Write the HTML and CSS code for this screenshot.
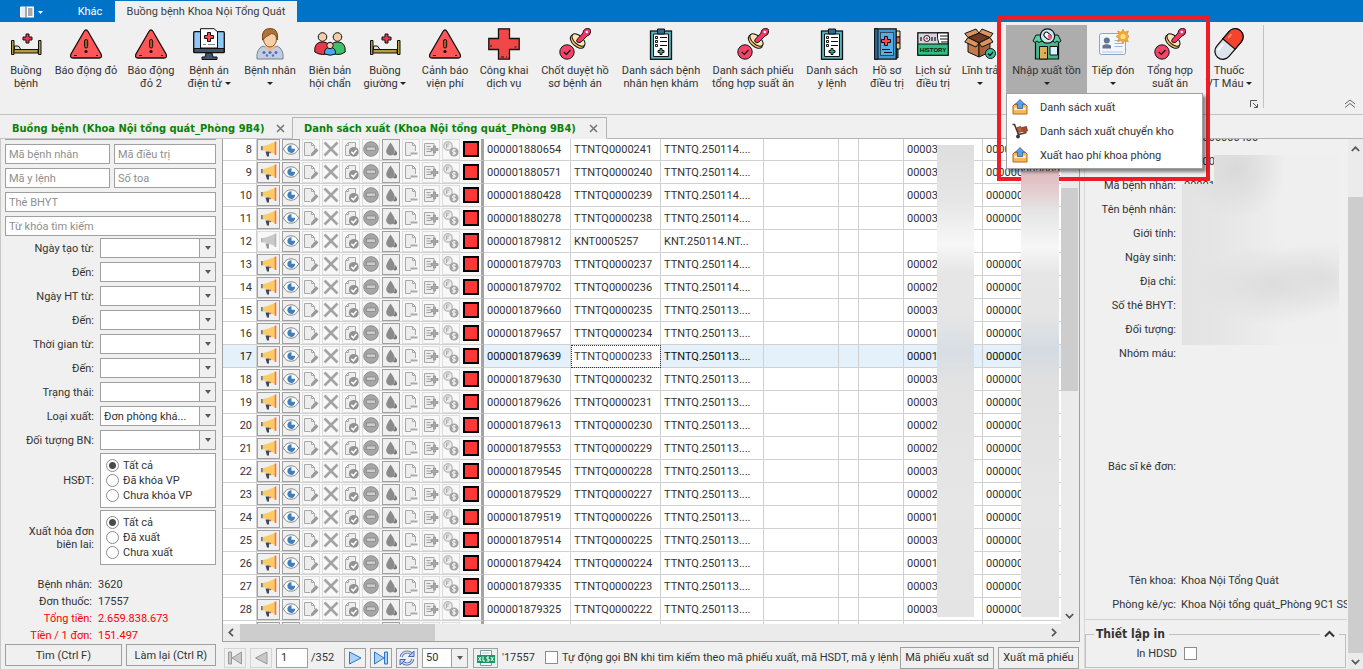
FILE: index.html
```html
<!DOCTYPE html>
<html lang="vi">
<head>
<meta charset="utf-8">
<title>Buồng bệnh Khoa Nội Tổng Quát</title>
<link rel="stylesheet" href="styles.css">
</head>
<body>
<svg class="defs" aria-hidden="true">
  <symbol id="i-bed" viewBox="0 0 32 32"><path d="M1.500 12.500h2.500v14h-2.500zM28.500 12.500h2.500v14h-2.500z" fill="#b59a3f" stroke="#111"/><path d="M4 21.500h24v3.500H4z" fill="#b59a3f" stroke="#111"/><path d="M4.500 21v-3h4l2 3" fill="#ddd" stroke="#111"/><path d="M16 6h3v3h3v3h-3v3h-3v-3h-3V9h3z" fill="#e8394a" stroke="#111"/></symbol>
  <symbol id="i-warn" viewBox="0 0 32 32"><path d="M14 3.500q2-3 4 0L31 26q1.500 4-2 4H3q-3.500 0-2-4z" fill="#ff5757" stroke="#111" stroke-width="1.300"/><rect x="14.500" y="11.500" width="3.200" height="8.500" rx="1.600" fill="#a05a2c" stroke="#111"/><circle cx="16" cy="23.500" r="1.600" fill="#111"/><path d="M4 27.500h3M26 27.500h2" stroke="#111"/></symbol>
  <symbol id="i-emr" viewBox="0 0 32 32"><rect x=".7" y="3.700" width="30.600" height="21" rx="1" fill="#8fc7f5" stroke="#111" stroke-width="1.300"/><path d="M1 20.500h30v4H1z" fill="#3d5670" stroke="#111"/><path d="M13 25h6l1 4h4v2.500H9V29h3z" fill="#3d5670" stroke="#111"/><path d="M7.500.7H21l3.500 3V20h-17z" fill="#fff" stroke="#111"/><path d="M14.500 4.500h3v3h3v3h-3v3h-3v-3h-3v-3h3z" fill="#ff4a4a" stroke="#111"/><path d="M10 16.500h3m2 0h7" stroke="#888"/></symbol>
  <symbol id="i-patient" viewBox="0 0 32 32"><path d="M3 31q-1-10 6-13l7 4 7-4q7 3 6 13z" fill="#c3cfdf" stroke="#71809a"/><path d="M11 16h10v4l-5 3-5-3z" fill="#efb98a"/><ellipse cx="16" cy="11" rx="6.500" ry="8" fill="#f7cfa4" stroke="#8a5628"/><path d="M8.500 12Q7 .5 16 .5T23.500 12q-1-6-6-6.500-6 3-9 6.500z" fill="#b0713a" stroke="#7a4a20"/><g fill="#5a6cc0"><circle cx="10" cy="24.500" r="1.600"/><circle cx="16" cy="24.500" r="1.600"/><circle cx="22" cy="24.500" r="1.600"/><circle cx="13" cy="27.500" r="1.200"/><circle cx="19" cy="27.500" r="1.200"/></g></symbol>
  <symbol id="i-group" viewBox="0 0 32 32"><path d="M.8 24q-1-10 7.700-10T16 24q-7 5-15.200 0z" fill="#e8394a" stroke="#111"/><path d="M16 24q-1-10 7.500-10T31.200 24q-7 5-15.200 0z" fill="#3fbf6b" stroke="#111"/><circle cx="8.500" cy="9" r="4.300" fill="#f7cba8" stroke="#111"/><circle cx="23.500" cy="9" r="4.300" fill="#f7cba8" stroke="#111"/><path d="M10.500 26q-.5-6.500 5.500-6.500t5.500 6.500q-5 2.500-11 0z" fill="#4aa8f0" stroke="#111"/><circle cx="16" cy="17.500" r="3.200" fill="#f7cba8" stroke="#111"/></symbol>
  <symbol id="i-cross" viewBox="0 0 32 32"><path d="M10.500.8h11v9.700h9.700v11h-9.700v9.700h-11v-9.700H.8v-11h9.700z" fill="#f04848" stroke="#111" stroke-width="1.300"/><path d="M13 29h3m2 0h1M3 19v-2M28.500 19h-2" stroke="#111"/></symbol>
  <symbol id="i-stamp" viewBox="0 0 32 32"><ellipse cx="18.500" cy="13.500" rx="8.500" ry="5" transform="rotate(42 18.500 13.500)" fill="#ffc266" stroke="#111"/><ellipse cx="19.500" cy="12" rx="8" ry="4.200" transform="rotate(42 19.500 12)" fill="#fbe7b5" stroke="#111"/><path d="M18.500 11l5.500-6q.5-4.500 4.500-4.500T31.500 4q0 3-3.500 4l-6 6q-2.500 1.500-3.800 0t.3-3z" fill="#f5346a" stroke="#111"/><circle cx="27.800" cy="4" r="1.200" fill="#fff"/><circle cx="8" cy="24" r="7.200" fill="#f5446a" stroke="#111"/><path d="M4.800 24l2.500 2.500 4.200-4.500" fill="none" stroke="#111" stroke-width="1.200"/></symbol>
  <symbol id="i-clip" viewBox="0 0 32 32"><rect x="5.500" y="3" width="21" height="28.300" fill="#56b6c0" stroke="#111" stroke-width="1.300"/><path d="M8.500 6h15v22.500h-15z" fill="#fff" stroke="#111"/><path d="M12.500 1h7v5h-7z" fill="#2d6a96" stroke="#111"/><path d="M15 9.500h7M15 13.500h7M15 17.500h7" stroke="#111" stroke-width="1.200"/><path d="M10.500 8.500h2v2h-2zM10.500 12.500h2v2h-2zM10.500 16.500h2v2h-2z" fill="#fff" stroke="#111"/><path d="M15 20.500h2v2h2v2h-2v2h-2v-2h-2v-2h2z" fill="#35b59a" stroke="#111"/></symbol>
  <symbol id="i-book" viewBox="0 0 32 32"><path d="M24 3h5v6h-5z" fill="#f7d7b0" stroke="#111"/><path d="M24 9h5v6h-5z" fill="#e8604a" stroke="#111"/><path d="M24 15h5v6h-5z" fill="#f5d070" stroke="#111"/><path d="M24 21h3v9h-3z" fill="#2d6a96" stroke="#111"/><path d="M3.700.8h21.500v30.400H3.700z" fill="#4597cf" stroke="#111" stroke-width="1.300"/><path d="M3.700.8H7v30.400H3.700z" fill="#2d6a96" stroke="#111"/><rect x="9.500" y="4.500" width="13" height="23" fill="#59ade0" stroke="#2a4a66"/><path d="M13.500 8.500h3v3h3v3h-3v3h-3v-3h-3v-3h3z" fill="#ff4a4a" stroke="#111"/><path d="M11 21.500h8m-6 3h8" stroke="#111"/></symbol>
  <symbol id="i-history" viewBox="0 0 32 32"><rect x=".8" y="4.800" width="30.400" height="22.400" fill="#d8d4e2" stroke="#111" stroke-width="1.300"/><path d="M20.500 5H31v11h-9q-2-5-1.500-11z" fill="#fff" stroke="#111"/><path d="M23 8h8m-8 3h8m-7 3h7M4 9v4M15 9v4M18 9v4" stroke="#111" stroke-width="1.200"/><circle cx="9.800" cy="10.500" r="3" fill="#fff" stroke="#111"/><circle cx="9.800" cy="10.500" r="1.300" fill="#e8394a"/><path d="M.8 16h30.400v11.200H.8z" fill="#2fbf82" stroke="#111"/><text x="16" y="24" text-anchor="middle" class="hist">HISTORY</text></symbol>
  <symbol id="i-box" viewBox="0 0 32 32"><path d="M4 10l11 5v14L4 24z" fill="#c27a4a" stroke="#111"/><path d="M26 10l-11 5v14l11-5z" fill="#a8623a" stroke="#111"/><path d="M4 9.500L15 5l11 4.500L15 15z" fill="#6e3a22" stroke="#111"/><path d="M4 9.500L.8 5.500 12 1l3 4zM26 9.500l3-4L18 1l-3 4zM4 9.500L.8 14 12 19l3-4zM26 9.500l3 4.500-11 5-3-4z" fill="#d99461" stroke="#111"/><circle cx="26.500" cy="25.500" r="5" fill="#35c1a0" stroke="#111"/><path d="M24 25.500l2 2 3-3.500" fill="none" stroke="#111" stroke-width="1.200"/></symbol>
  <symbol id="i-store" viewBox="0 0 32 32"><path d="M4.500 13h23v18h-23z" fill="#47b88d" stroke="#111" stroke-width="1.200"/><path d="M5 7h22l3 6q-2 3-4 0-2 3-4.500 0-2.500 3-5.500 0-2.500 3-5.500 0-2.500 3-4.500 0-2 3-4 0z" fill="#5bd0a3" stroke="#111"/><path d="M8.500 18.500h8V31h-8z" fill="#e3ad5e" stroke="#111"/><path d="M19 18.500h7.500V27H19z" fill="#d9f1ff" stroke="#111"/><circle cx="14" cy="25" r=".8" fill="#111"/><circle cx="16.500" cy="8" r="7.200" fill="#c9e6f5" stroke="#111" stroke-width="1.200"/><rect x="12.500" y="5.200" width="8" height="5" rx="2.500" transform="rotate(42 16.500 7.800)" fill="#fff" stroke="#111"/><path d="M16.500 7.800l1.600-1.700q3 2 3 3.500-1 3-3 2z" fill="#f06070"/></symbol>
  <symbol id="i-card" viewBox="0 0 32 32"><rect x="2.500" y="5.500" width="26" height="21" rx="2" fill="#f3f7fd" stroke="#8ba4c8"/><path d="M5 24h21" stroke="#d4e0f0" stroke-width="2"/><circle cx="9.800" cy="12.500" r="3" fill="#64748f"/><path d="M5.500 20.500v-3q4-2.500 8.500 0v3z" fill="#64748f"/><path d="M17.500 12.500h4M17.500 15.500h8M17.500 18.500h8" stroke="#9db3d2"/><path d="M26 1l1.700 3.300 3.700-1.300-1.300 3.700L33 8.500l-3 1.800 1.300 3.500-3.700-1.200L26 16l-1.700-3.400-3.600 1.200 1.200-3.500L19 8.500l2.900-1.800L20.700 3l3.600 1.300z" fill="#f5a93b" stroke="#d28420" stroke-width=".6"/><circle cx="26" cy="8.500" r="2.600" fill="#ffdf8a"/></symbol>
  <symbol id="i-pill" viewBox="0 0 32 32"><g transform="rotate(-50 16 16)"><rect x="-1.500" y="8" width="35" height="16" rx="8" fill="#dde3ea" stroke="#111" stroke-width="1.300"/><path d="M16 8h9.500a8 8 0 0 1 0 16H16z" fill="#f4442e" stroke="#111" stroke-width="1.200"/><path d="M4 11.500h8" stroke="#fff" stroke-width="2"/><path d="M20 11.500h5" stroke="#ff9a85" stroke-width="1.500"/></g></symbol>
  <symbol id="i-out" viewBox="0 0 16 16"><path d="M1 7l2-2h10l2 2v8H1z" fill="#f6b95a" stroke="#b8651c"/><path d="M2 8.500h3.500q2.500 3 5 0H14V11H2z" fill="#ffe9b8"/><path d="M8 .6l4.700 4.600h-2.200V9.500h-5V5.200H3.300z" fill="#5f9fe5" stroke="#2c5f9e" stroke-width=".8"/></symbol>
  <symbol id="i-cart" viewBox="0 0 16 16"><path d="M.5 1.500h2l4 10 8-2" fill="none" stroke="#4a3a30" stroke-width="1.600"/><path d="M5 4.500l4-1 1.500 5-4 1z" fill="#c2603a" stroke="#6a2c18" stroke-width=".7"/><path d="M10 4.500l4.500-1 1 4.500-4 1z" fill="#a84a2c" stroke="#6a2c18" stroke-width=".7"/><circle cx="6" cy="13.500" r="1.900" fill="#2f3a3a"/></symbol>
  <symbol id="g-mega" viewBox="0 0 16 16"><path d="M1.500 5l4-.8L14 1v12L5.500 9.800l-4-.3z" fill="#fbcb66"/><path d="M13.700.5h1.600v13.500h-1.600z" fill="#ff7043"/><path d="M.3 5h1.200v4.200H.3zM4.500 10.500H8V15.500H6z" fill="#34495e"/><path d="M8 10.800h2v1.500H8z" fill="#e8543a"/></symbol>
  <symbol id="g-mega-off" viewBox="0 0 16 16"><path d="M1.500 5l4-.8L14 1v12L5.500 9.800l-4-.3z" fill="#c9c9c9"/><path d="M13.700.5h1.600v13.500h-1.600z" fill="#b5b5b5"/><path d="M.3 5h1.200v4.200H.3zM4.500 10.500H8V15.500H6z" fill="#979797"/></symbol>
  <symbol id="g-eye" viewBox="0 0 16 16"><path d="M.4 8Q3 2.800 8 2.800T15.600 8Q13 13.200 8 13.200T.4 8z" fill="#fff" stroke="#777" stroke-width=".9"/><path d="M8.500 4.200V7.800h3.600A3.900 3.900 0 1 1 8.500 4.200z" fill="#3f7fbe"/></symbol>
  <symbol id="g-edit" viewBox="0 0 16 16"><path d="M7 14.500H1.500v-13h7l3 3V8" fill="#ededed" stroke="#a8a8a8"/><path d="M8.500 1.500v3h3" fill="none" stroke="#a8a8a8"/><path d="M13 7l2.500 2.500-5 5L7.500 15.500l.7-3z" fill="#9a9a9a"/></symbol>
  <symbol id="g-x" viewBox="0 0 16 16"><path d="M1.500 1.500l13 13m0-13l-13 13" stroke="#a3a3a3" stroke-width="2.600"/></symbol>
  <symbol id="g-check" viewBox="0 0 16 16"><path d="M7 14.500H2.500v-10l3-3h7V7" fill="#ededed" stroke="#a8a8a8"/><path d="M5.500 1.500v3h-3" fill="none" stroke="#a8a8a8"/><circle cx="10.800" cy="10.800" r="4.900" fill="#929292"/><path d="M8.300 10.800l2 2 3.200-3.800" fill="none" stroke="#fff" stroke-width="1.500"/></symbol>
  <symbol id="g-minus" viewBox="0 0 16 16"><circle cx="8" cy="8" r="7.300" fill="#a6a6a6" stroke="#8f8f8f"/><rect x="3.500" y="6" width="9" height="3.600" fill="#ccc" stroke="#808080" stroke-width=".7"/></symbol>
  <symbol id="g-drop" viewBox="0 0 16 16"><path d="M7.500 1.500q4.500 6 4.300 8.800a4.300 4.300 0 0 1-8.600 0Q3.500 7 7.500 1.500z" fill="#8b8b8b"/><path d="M12.300 9q2.500 3 1.500 4.500T10 14q2.300-1.500 2.300-5z" fill="#777"/></symbol>
  <symbol id="g-page" viewBox="0 0 16 16"><path d="M8 14.500H2.500v-13h7l3 3V10" fill="#ededed" stroke="#a8a8a8"/><path d="M9.500 1.500v3h3" fill="none" stroke="#a8a8a8"/><path d="M7.500 11.500h7v2h-7z" fill="#aaa"/></symbol>
  <symbol id="g-add" viewBox="0 0 16 16"><path d="M11 12v2.500H1.500v-12H11V5" fill="#ededed" stroke="#a8a8a8"/><path d="M3.500 5.500h4m-4 2.500h4m-4 2.500h5" stroke="#a0a0a0"/><path d="M10.500 5h2v2.500H15v2h-2.500V12h-2V9.500H8v-2h2.500z" fill="#aaa" stroke="#888" stroke-width=".7"/></symbol>
  <symbol id="g-coin" viewBox="0 0 16 16"><circle cx="5" cy="5" r="4.200" fill="#ededed" stroke="#bdbdbd" stroke-width="1.400"/><path d="M6.500 3h-3v4M3.500 5h2" fill="none" stroke="#a8a8a8"/><circle cx="11" cy="11" r="4.600" fill="#a3a3a3"/><path d="M12.800 9q-3.500-1-3.500.8t3.400 2q0 1.800-3.500 1.200M11 7.800v6.400" fill="none" stroke="#fff" stroke-width=".9"/></symbol>
  <symbol id="g-red" viewBox="0 0 16 16"><path d="M1 1h14v14H1z" fill="#ff3737" stroke="#000" stroke-width="2"/></symbol>
</svg>

<div class="app">
  <header class="titlebar">
    <button class="appmenu" aria-label="Trình đơn"><svg width="26" height="12" viewBox="0 0 26 12"><path d="M1.500 1h5v10h-5z" fill="#e8eef5" stroke="#fff"/><path d="M7 .5h8v11H7z" fill="#fff"/><path d="M7 1v10M9 3h4.500M9 5h4.500M9 7h4.500M9 9h4.500" stroke="#555"/><path d="M19 5h5l-2.500 3z" fill="#fff"/></svg></button>
    <button class="rtab">Khác</button>
    <button class="rtab active">Buồng bệnh Khoa Nội Tổng Quát</button>
  </header>

  <nav class="ribbon">
    <button class="item w52"><svg><use href="#i-bed"/></svg><span>Buồng<br>bệnh</span></button>
    <button class="item w68"><svg><use href="#i-warn"/></svg><span>Báo động đỏ</span></button>
    <button class="item w62"><svg><use href="#i-warn"/></svg><span>Báo động<br>đỏ 2</span></button>
    <button class="item w54"><svg><use href="#i-emr"/></svg><span>Bệnh án<br>điện tử <i class="dd"></i></span></button>
    <button class="item w68"><svg><use href="#i-patient"/></svg><span>Bệnh nhân<br><i class="dd"></i></span></button>
    <button class="item w52"><svg><use href="#i-group"/></svg><span>Biên bản<br>hội chẩn</span></button>
    <button class="item w58"><svg><use href="#i-bed"/></svg><span>Buồng<br>giường <i class="dd"></i></span></button>
    <button class="item w62"><svg><use href="#i-warn"/></svg><span>Cảnh báo<br>viện phí</span></button>
    <button class="item w56"><svg><use href="#i-cross"/></svg><span>Công khai<br>dịch vụ</span></button>
    <button class="item w86"><svg><use href="#i-stamp"/></svg><span>Chốt duyệt hồ<br>sơ bệnh án</span></button>
    <button class="item w86"><svg><use href="#i-clip"/></svg><span>Danh sách bệnh<br>nhân hẹn khám</span></button>
    <button class="item w98"><svg><use href="#i-stamp"/></svg><span>Danh sách phiếu<br>tổng hợp suất ăn</span></button>
    <button class="item w60"><svg><use href="#i-clip"/></svg><span>Danh sách<br>y lệnh</span></button>
    <button class="item w50"><svg><use href="#i-book"/></svg><span>Hồ sơ<br>điều trị</span></button>
    <button class="item w42"><svg><use href="#i-history"/></svg><span>Lịch sử<br>điều trị</span></button>
    <button class="item w52"><svg><use href="#i-box"/></svg><span>Lĩnh trả<br><i class="dd"></i></span></button>
    <div class="anchor">
      <button class="item w81 open"><svg><use href="#i-store"/></svg><span>Nhập xuất tồn<br><i class="dd"></i></span></button>
      <div class="callout"></div>
      <div class="menu">
        <button><svg><use href="#i-out"/></svg>Danh sách xuất</button>
        <button><svg><use href="#i-cart"/></svg>Danh sách xuất chuyển kho</button>
        <button><svg><use href="#i-out"/></svg>Xuất hao phí khoa phòng</button>
      </div>
    </div>
    <button class="item w52"><svg><use href="#i-card"/></svg><span>Tiếp đón<br><i class="dd"></i></span></button>
    <button class="item w62"><svg><use href="#i-stamp"/></svg><span>Tổng hợp<br>suất ăn</span></button>
    <button class="item w56"><svg><use href="#i-pill"/></svg><span>Thuốc<br>VT Máu <i class="dd"></i></span></button>
    <div class="launcher"><svg width="8" height="8" viewBox="0 0 8 8"><path d="M.5 7V.5H7M3 3l4 4M7.500 4v3.500H4" fill="none" stroke="#555"/></svg></div>
    <button class="collapse" aria-label="Thu gọn"><svg width="12" height="9" viewBox="0 0 12 9"><path d="M1 5l5-4 5 4M1 8.500l5-4 5 4" fill="none" stroke="#666"/></svg></button>
  </nav>

  <div class="doctabs">
    <div class="doctab">Buồng bệnh (Khoa Nội tổng quát_Phòng 9B4)<button aria-label="Đóng"><svg width="9" height="9" viewBox="0 0 9 9"><path d="M1 1l7 7m0-7L1 8" stroke="#777" stroke-width="1.600"/></svg></button></div>
    <div class="doctab active">Danh sách xuất (Khoa Nội tổng quát_Phòng 9B4)<button aria-label="Đóng"><svg width="9" height="9" viewBox="0 0 9 9"><path d="M1 1l7 7m0-7L1 8" stroke="#777" stroke-width="1.600"/></svg></button></div>
    <div class="rest"></div>
  </div>

  <main class="main">
    <form class="filter">
      <div class="cut"></div>
      <div class="pair"><input class="a" placeholder="Mã bệnh nhân" aria-label="Mã bệnh nhân"><input class="b" placeholder="Mã điều trị" aria-label="Mã điều trị"></div>
      <div class="pair"><input class="a" placeholder="Mã y lệnh" aria-label="Mã y lệnh"><input class="b" placeholder="Số toa" aria-label="Số toa"></div>
      <div class="pair"><input placeholder="Thẻ BHYT" aria-label="Thẻ BHYT"></div>
      <div class="pair"><input placeholder="Từ khóa tìm kiếm" aria-label="Từ khóa tìm kiếm"></div>
      <div class="fields">
        <label for="f1">Ngày tạo từ:</label><div class="combo"><select id="f1"><option></option></select></div>
        <label for="f2">Đến:</label><div class="combo"><select id="f2"><option></option></select></div>
        <label for="f3">Ngày HT từ:</label><div class="combo"><select id="f3"><option></option></select></div>
        <label for="f4">Đến:</label><div class="combo"><select id="f4"><option></option></select></div>
        <label for="f5">Thời gian từ:</label><div class="combo"><select id="f5"><option></option></select></div>
        <label for="f6">Đến:</label><div class="combo"><select id="f6"><option></option></select></div>
        <label for="f7">Trạng thái:</label><div class="combo"><select id="f7"><option></option></select></div>
        <label for="f8">Loại xuất:</label><div class="combo"><select id="f8"><option>Đơn phòng khá...</option></select></div>
        <label for="f9">Đối tượng BN:</label><div class="combo"><select id="f9"><option></option></select></div>
      </div>
      <div class="choice"><span>HSĐT:</span><div class="radios"><label><input type="radio" name="h" checked>Tất cả</label><label><input type="radio" name="h">Đã khóa VP</label><label><input type="radio" name="h">Chưa khóa VP</label></div></div>
      <div class="choice"><span>Xuất hóa đơn<br>biên lai:</span><div class="radios"><label><input type="radio" name="x" checked>Tất cả</label><label><input type="radio" name="x">Đã xuất</label><label><input type="radio" name="x">Chưa xuất</label></div></div>
      <div class="stats">
        <span>Bệnh nhân:</span><b>3620</b>
        <span>Đơn thuốc:</span><b>17557</b>
        <span class="red">Tổng tiền:</span><b class="red">2.659.838.673</b>
        <span class="red">Tiền / 1 đơn:</span><b class="red">151.497</b>
      </div>
      <div class="actions"><button type="button" class="btn find">Tìm (Ctrl F)</button><button type="button" class="btn reset">Làm lại (Ctrl R)</button></div>
    </form>

    <section class="center">
      <div class="grid">
        <div class="gridview">
          <table class="rows">
            <colgroup><col class="c34"><col class="c24"><col class="c20" span="9"><col class="c23"><col class="c87"><col class="c90"><col class="c103"><col class="c75"><col class="c20"><col class="c45"><col class="c79"><col></colgroup>
            <tbody id="rows"></tbody>
          </table>
          <div class="mask m1"></div>
          <div class="mask m2"></div>
        </div>
        <div class="vbar"><i class="thumb"></i><svg width="9" height="6" viewBox="0 0 9 6"><path d="M.8 1l3.700 3.700L8.200 1" fill="none" stroke="#555" stroke-width="1.700"/></svg></div>
        <div class="hbar"><svg width="6" height="9" viewBox="0 0 6 9"><path d="M5 .8L1.300 4.500 5 8.200" fill="none" stroke="#555" stroke-width="1.700"/></svg><i class="thumb"></i><svg width="6" height="9" viewBox="0 0 6 9"><path d="M1 .8l3.700 3.700L1 8.200" fill="none" stroke="#555" stroke-width="1.700"/></svg></div>
      </div>
      <div class="pager">
        <button class="pb off" aria-label="Trang đầu"><svg viewBox="0 0 16 16"><path d="M1.500 2h3v12h-3zM14.500 2v12L5 8z" fill="#c8c8c8" stroke="#999"/></svg></button>
        <button class="pb off" aria-label="Trang trước"><svg viewBox="0 0 16 16"><path d="M14 2v12L2.500 8z" fill="#c8c8c8" stroke="#999"/></svg></button>
        <input class="pno" value="1" aria-label="Trang">
        <span class="tot">/352</span>
        <button class="pb" aria-label="Trang sau"><svg viewBox="0 0 16 16"><path d="M2.500 2v12L14 8z" fill="#a9d2fa" stroke="#2f74c8"/></svg></button>
        <button class="pb" aria-label="Trang cuối"><svg viewBox="0 0 16 16"><path d="M11.500 2h3v12h-3zM1.500 2v12L11 8z" fill="#a9d2fa" stroke="#2f74c8"/></svg></button>
        <button class="pb" aria-label="Làm mới"><svg viewBox="0 0 16 16"><path d="M2.200 7A6 6 0 0 1 12 3.500M13.800 9A6 6 0 0 1 4 12.500" fill="none" stroke="#4a68b0" stroke-width="3"/><path d="M2.200 7A6 6 0 0 1 12 3.500M13.800 9A6 6 0 0 1 4 12.500" fill="none" stroke="#d5e1f7" stroke-width="1.300"/><path d="M9.500 6.500h5.500V1zM6.500 9.500H1V15z" fill="#b9cbf0" stroke="#4a68b0"/></svg></button>
        <div class="combo size"><select aria-label="Số dòng"><option>50</option></select></div>
        <button class="pb xls" aria-label="Xuất XLSX"><svg viewBox="0 0 18 16"><path d="M3.500.5h11v15h-11z" fill="#fff" stroke="#7a9aa8"/><path d="M5.500 3h7" stroke="#9cc"/><path d="M0 5h18v8H0z" fill="#159a63"/><path d="M1.500 7l2.500 4m0-4l-2.500 4M6 6.500V11h2M12 7h-2v2h2v2h-2.500M14 7l2.500 4m0-4L14 11" fill="none" stroke="#fff"/></svg></button>
        <span class="cnt">'17557</span>
        <label class="auto"><input type="checkbox">Tự động gọi BN khi tìm kiếm theo mã phiếu xuất, mã HSDT, mã y lệnh</label>
        <button class="btn sd">Mã phiếu xuất sd</button>
        <button class="btn xm">Xuất mã phiếu</button>
      </div>
    </section>

    <aside class="detail">
      <div class="info">
        <dl>
          <dt></dt><dd>000000000400</dd>
          <dt></dt><dd>00000</dd>
          <dt>Mã bệnh nhân:</dt><dd>00001</dd>
          <dt>Tên bệnh nhân:</dt><dd></dd>
          <dt>Giới tính:</dt><dd></dd>
          <dt>Ngày sinh:</dt><dd></dd>
          <dt>Địa chỉ:</dt><dd></dd>
          <dt>Số thẻ BHYT:</dt><dd></dd>
          <dt>Đối tượng:</dt><dd></dd>
          <dt>Nhóm máu:</dt><dd></dd>
          <dt>Bác sĩ kê đơn:</dt><dd></dd>
          <dt>Tên khoa:</dt><dd class="t">Khoa Nội Tổng Quát</dd>
          <dt>Phòng kê/yc:</dt><dd class="t">Khoa Nội tổng quát_Phòng 9C1 SS</dd>
        </dl>
        <div class="mask m3"></div>
        <fieldset><legend>Thiết lập in</legend><svg class="fold" width="11" height="8" viewBox="0 0 11 8"><path d="M1 6.500L5.500 2 10 6.500" fill="none" stroke="#333" stroke-width="2"/></svg>
          <label>In HDSD<input type="checkbox"></label></fieldset>
      </div>
      <div class="pbar"><svg width="9" height="6" viewBox="0 0 9 6"><path d="M.8 5l3.700-3.700L8.200 5" fill="none" stroke="#555" stroke-width="1.700"/></svg><i class="thumb"></i><svg width="9" height="6" viewBox="0 0 9 6"><path d="M.8 1l3.700 3.700L8.200 1" fill="none" stroke="#555" stroke-width="1.700"/></svg></div>
    </aside>
  </main>
</div>
<script src="script.js"></script>
</body>
</html>
```
FILE: styles.css
```css
* { box-sizing: border-box; }
body { margin: 0; font: 11px/13px Roboto, "Noto Sans", sans-serif; color: #333; background: #f0f0f0; }
button, input, select { font: inherit; color: inherit; margin: 0; padding: 0; border: 0; background: none; border-radius: 0; }
svg { display: block; }
.defs { position: absolute; width: 0; height: 0; }
.hist { font: bold 6px "Liberation Sans", sans-serif; fill: #111; }
.app { height: 100vh; display: flex; flex-direction: column; overflow: hidden; }

.titlebar { flex: none; height: 22px; padding-top: 1px; background: #0173c7; display: flex; }
.appmenu { width: 65px; padding-left: 19px; }
.rtab { width: 50px; color: #fff; }
.rtab.active { width: 182px; background: #f0f0f0; color: #3c3c3c; }

.ribbon { flex: none; height: 93px; padding-top: 3px; border-bottom: 1px solid #c3c3c3; display: flex; align-items: flex-start; }
.item { flex: none; height: 68px; padding-top: 3px; display: flex; flex-direction: column; align-items: center; gap: 4px; text-align: center; white-space: nowrap; }
.item > svg { flex: none; width: 32px; height: 32px; overflow: visible; }
.item > span { height: 26px; }
.item.open { background: #adadad; }
.dd { display: inline-block; margin: 0 0 2px 2px; border: 3px solid transparent; border-top-color: #222; border-bottom: 0; }
br + .dd { margin-left: 0; }
.w42 { width: 42px; } .w50 { width: 50px; } .w52 { width: 52px; } .w54 { width: 54px; }
.w56 { width: 56px; } .w58 { width: 58px; } .w60 { width: 60px; } .w62 { width: 62px; }
.w68 { width: 68px; } .w81 { width: 81px; } .w86 { width: 86px; } .w98 { width: 98px; }
.anchor { position: relative; }
.callout { position: absolute; z-index: 2; left: -9px; top: -9px; width: 213px; height: 165px; border: 4px solid #ee1c25; pointer-events: none; }
.menu { position: absolute; z-index: 4; left: 0; top: 68px; width: 197px; padding: 1px; border: 1px solid #a0a0a0; background: #fff; box-shadow: 3px 3px 3px rgba(0,0,0,.45); }
.menu button { display: flex; align-items: center; gap: 12px; width: 100%; height: 24px; padding-left: 4px; }
.menu svg { width: 16px; height: 16px; }
.launcher { align-self: stretch; display: flex; align-items: flex-end; margin-bottom: 6px; padding-right: 5px; width: 7px; justify-content: flex-end; border-right: 1px solid #c3c3c3; }
.launcher svg { flex: none; }
.collapse { margin-left: auto; align-self: flex-end; padding: 0 7px 6px 0; }

.doctabs { flex: none; height: 24px; display: flex; font-family: "DejaVu Sans Condensed", "Noto Sans", sans-serif; font-weight: bold; color: #078307; }
.doctab { display: flex; align-items: center; justify-content: space-between; width: 292px; margin-top: 2px; padding: 1px 7px 0 12px; border-bottom: 1px solid #c8c8c8; white-space: nowrap; }
.doctab.active { width: 315px; padding: 0 8px 0 11px; border: 1px solid #b4b4b4; border-bottom-color: #f0f0f0; }
.rest { flex: 1; border-bottom: 1px solid #b4b4b4; }

.main { flex: 1; min-height: 0; display: flex; }
.filter { flex: none; width: 222px; padding: 0 6px 0 4px; border-left: 1px solid #c8c8c8; }
.cut { height: 1px; margin-bottom: 4px; background: #a0a0a0; }
.filter .pair { display: flex; gap: 4px; margin-bottom: 4px; }
.pair input { width: 100%; height: 20px; padding: 0 3px; border: 1px solid #a0a0a0; background: #fff; }
.pair .a { flex: 105; } .pair .b { flex: 102; }
.pair input::placeholder { color: #8f8f8f; opacity: 1; }
.fields { display: grid; grid-template-columns: 89px 1fr; grid-auto-rows: 20px; gap: 4px 6px; align-items: center; text-align: right; margin-top: -2px; }
.combo { position: relative; height: 20px; display: flex; }
.combo select { width: 100%; height: 20px; appearance: none; padding: 0 17px 0 3px; border: 1px solid #a0a0a0; background: linear-gradient(90deg, #a0a0a0 1px, #f0f0f0 1px) right / 16px 100% no-repeat #fff; }
.combo::after { content: ""; position: absolute; right: 5px; top: 8px; border: 3px solid transparent; border-top: 4px solid #5a5a5a; border-bottom: 0; pointer-events: none; }
.choice { display: grid; grid-template-columns: 89px 1fr; gap: 6px; align-items: center; text-align: right; margin-top: 3px; }
.choice + .choice { margin-top: 2px; }
.radios { height: 55px; padding: 4px 5px; border: 1px solid #a0a0a0; background: #fff; text-align: left; }
.radios label { display: flex; align-items: center; gap: 4px; height: 15px; }
.radios input { appearance: none; width: 13px; height: 13px; border: 1px solid #8c8c8c; border-radius: 50%; background: #fff; }
.radios input:checked { background: radial-gradient(#4a4a4a 3px, #fff 4px); }
.stats { display: grid; grid-template-columns: 87px 1fr; grid-auto-rows: 17px; column-gap: 6px; align-items: center; margin-top: 11px; }
.stats span { text-align: right; }
.stats b { font-weight: normal; }
.red { color: #f00; }
.btn { height: 22px; border: 1px solid #a0a0a0; background: #f0f0f0; white-space: nowrap; }
.actions { display: flex; gap: 4px; }
.find { flex: 117; } .reset { flex: 90; }

.center { flex: 1; min-width: 0; display: flex; flex-direction: column; }
.grid { flex: 1; min-height: 0; display: grid; grid-template: 1fr 17px / 1fr 18px; border: 1px solid #a0a0a0; border-top: 0; background: #fff; }
.gridview { position: relative; contain: size; overflow: clip; display: flex; align-items: flex-start; }
.rows { width: 100%; margin-top: -1px; border-collapse: separate; border-spacing: 0; table-layout: fixed; }
.rows td { height: 23px; padding: 0 0 0 3px; border: solid #d0d0d0; border-width: 0 1px 1px 0; overflow: hidden; white-space: nowrap; }
.rows td:last-child { border-right: 0; }
.rows td.n { text-align: right; padding-right: 4px; }
.rows td.g { padding: 0; border-width: 0 0 1px; background: #f8f8f8; }
.rows td.g button { display: flex; align-items: center; justify-content: center; width: 18px; height: 21px; margin: 0 1px; border: 1px solid #dedede; }
.rows td.g .on { background: #f0f0f0; border-color: #a0a0a0; }
.rows td.g .mega { width: 23px; margin: 0 1px 0 0; }
.rows td.g svg { flex: none; width: 16px; height: 16px; }
.rows td.g button.sq { width: 20px; margin: 0; border: 0; }
.rows td.last { border-right: 3px solid #a3a3a3; }
.rows tr.sel td:not(.g) { background: #e4f1fa; color: #111; }
.rows tr.sel td.focus { background: #fff; outline: 1px dotted #333; outline-offset: -1px; color: #3c3c3c; }
.c20 { width: 20px; } .c23 { width: 23px; } .c24 { width: 24px; } .c34 { width: 34px; } .c45 { width: 45px; } .c75 { width: 75px; }
.c79 { width: 79px; } .c87 { width: 87px; } .c90 { width: 90px; } .c103 { width: 103px; }
.mask { position: absolute; z-index: 3; }
.m1 { right: 87px; top: 6px; bottom: 7px; width: 37px; background: linear-gradient(#dedede, #e6e6e6 12%, #f7f7f7 21%, #e6e6e6 27%, #e6e6e6 36%, #d8dee4 44%, #e2e2e2 50%, #e6e6e6 75%, #e4e4e4); }
.m2 { right: 2px; top: 32px; bottom: 7px; width: 38px; background: linear-gradient(#e0b9bd, #e4cfd1 5%, #e5e5e5 9%, #f7f7f7 17%, #e6e6e6 23%, #e5e5e5 32%, #d3dbe2 40%, #dfdfdf 47%, #e6e6e6 75%, #e4e4e4); }
.thumb { display: block; background: #cdcdcd; }
.vbar { background: #ebebeb; display: flex; flex-direction: column; align-items: center; padding: 49px 1px 5px 0; }
.vbar .thumb { width: 17px; height: 47%; margin-bottom: auto; }
.hbar { grid-column: 1 / 3; background: #ebebeb; display: flex; align-items: center; padding: 0 22px 0 5px; gap: 6px; }
.hbar .thumb { width: 195px; height: 17px; margin-right: auto; }
.pager { flex: none; height: 27px; padding: 4px 1px 0 2px; display: flex; align-items: center; }
.pb { flex: none; width: 22px; height: 20px; margin-right: 4px; border: 1px solid #a0a0a0; display: flex; align-items: center; justify-content: center; }
.pb.off { border-color: #d4d4d4; }
.pb svg { width: 16px; height: 16px; }
.pno { width: 32px; height: 20px; padding: 0 4px; border: 1px solid #a0a0a0; background: #fff; }
.tot { width: 36px; padding-left: 3px; }
.combo.size { width: 46px; margin-right: 5px; }
.pb.xls { width: 25px; margin-right: 4px; }
.pb.xls svg { width: 18px; }
.cnt { width: 43px; }
.auto { display: flex; align-items: center; gap: 4px; white-space: nowrap; }
input[type=checkbox] { appearance: none; flex: none; width: 13px; height: 13px; border: 1px solid #8c8c8c; background: #fff; }
.pager .btn { flex: none; width: 94px; }
.pager .sd { margin-left: auto; margin-right: 4px; }
.pager .xm { width: 81px; }

.detail { flex: none; width: 283px; display: flex; padding-left: 4px; }
.info { flex: 1; min-width: 0; position: relative; display: flex; flex-direction: column; overflow: clip; border-left: 1px solid #d8d8d8; }
.info dl { flex: 1; min-height: 0; margin: -14px 0 0; padding-bottom: 3px; display: grid; grid-template: repeat(10, 24px) 1fr 24px 24px / 91px 1fr; column-gap: 8px; align-items: center; border-bottom: 1px solid #d0d0d0; }
.info dt { text-align: right; white-space: nowrap; }
.info dd { margin: 0; white-space: nowrap; overflow: hidden; }
.info dd.t { margin-left: -3px; }
.m3 { left: 97px; top: 16px; width: 157px; height: 190px; clip-path: polygon(32px 0, 100% 0, 100% 100%, 0 100%, 0 29px, 32px 29px); background: radial-gradient(circle at 54px 14px, #d9d9d9, transparent 50px), radial-gradient(ellipse 75px 40px at 90px 130px, #dcdcdc, transparent), radial-gradient(ellipse 60px 35px at 140px 122px, #e0e0e0, transparent), linear-gradient(90deg, #e3e3e3, #e5e5e5 20%, #efefef 65%); }
fieldset { flex: none; position: relative; height: 41px; margin: 7px 1px 1px 0; padding: 0 0 0 8px; border: 1px solid #c0c0c0; min-width: 0; }
legend { padding: 0 4px 0 2px; font: bold 12px/14px "DejaVu Sans Condensed", "Noto Sans", sans-serif; }
.fold { position: absolute; right: 6px; top: -11px; padding: 0 4px; width: 19px; background: #f0f0f0; }
fieldset label { display: flex; justify-content: flex-end; align-items: center; gap: 7px; width: 103px; margin-top: 6px; }
.pbar { flex: none; width: 15px; margin-left: 1px; padding: 7px 0 4px; background: #ebebeb; display: flex; flex-direction: column; align-items: center; }
.pbar .thumb { width: 15px; flex: 1; margin: 45px 0 6px; }
```
FILE: script.js
```js
const data = [
  [8, '000001880654', 'TTNTQ0000241', 'TTNTQ.250114....', '00003'],
  [9, '000001880571', 'TTNTQ0000240', 'TTNTQ.250114....', '00003'],
  [10, '000001880428', 'TTNTQ0000239', 'TTNTQ.250114....', '00003'],
  [11, '000001880278', 'TTNTQ0000238', 'TTNTQ.250114....', '00003'],
  [12, '000001879812', 'KNT0005257', 'KNT.250114.NT...', ''],
  [13, '000001879703', 'TTNTQ0000237', 'TTNTQ.250114....', '00002'],
  [14, '000001879702', 'TTNTQ0000236', 'TTNTQ.250114....', '00002'],
  [15, '000001879660', 'TTNTQ0000235', 'TTNTQ.250113....', '00003'],
  [16, '000001879657', 'TTNTQ0000234', 'TTNTQ.250113....', '00001'],
  [17, '000001879639', 'TTNTQ0000233', 'TTNTQ.250113....', '00001'],
  [18, '000001879630', 'TTNTQ0000232', 'TTNTQ.250113....', '00003'],
  [19, '000001879626', 'TTNTQ0000231', 'TTNTQ.250113....', '00003'],
  [20, '000001879613', 'TTNTQ0000230', 'TTNTQ.250113....', '00002'],
  [21, '000001879553', 'TTNTQ0000229', 'TTNTQ.250113....', '00002'],
  [22, '000001879545', 'TTNTQ0000228', 'TTNTQ.250113....', '00003'],
  [23, '000001879529', 'TTNTQ0000227', 'TTNTQ.250113....', '00002'],
  [24, '000001879519', 'TTNTQ0000226', 'TTNTQ.250113....', '00001'],
  [25, '000001879514', 'TTNTQ0000225', 'TTNTQ.250113....', '00003'],
  [26, '000001879424', 'TTNTQ0000224', 'TTNTQ.250113....', '00001'],
  [27, '000001879335', 'TTNTQ0000223', 'TTNTQ.250113....', '00003'],
  [28, '000001879325', 'TTNTQ0000222', 'TTNTQ.250113....', '00003'],
  ['', '', '', '', '']
];
const actions = [
  ['mega', 'Gọi', 'on mega'], ['eye', 'Xem', 'on'], ['edit', 'Sửa', ''], ['x', 'Xóa', ''], ['check', 'Duyệt', ''],
  ['minus', 'Từ chối', ''], ['drop', 'Máu', 'on'], ['page', 'Phiếu', ''], ['add', 'Thêm', ''], ['coin', 'Thanh toán', ''], ['red', 'Trạng thái', 'sq']
];
document.getElementById('rows').innerHTML = data.map(([n, code, slip, batch, part]) => {
  const cells = actions.map(([id, name, cls], i) => {
    const off = n === 12 && id === 'mega';
    const icon = n === '' ? '' : `<svg><use href="#g-${id}${off ? '-off' : ''}"/></svg>`;
    return `<td class="g${i === 10 ? ' last' : ''}"><button class="${off ? 'mega' : cls}" aria-label="${name}">${icon}</button></td>`;
  }).join('');
  const sel = n === 17;
  const pid = part ? (n === 9 ? '000000292902' : '000000') : '';
  return `<tr class="${sel ? 'sel' : ''}"><td class="n">${n}</td>${cells}<td>${code}</td><td class="${sel ? 'focus' : ''}">${slip}</td><td>${batch}</td><td></td><td></td><td></td><td>${part}</td><td>${pid}</td></tr>`;
}).join('');
```
